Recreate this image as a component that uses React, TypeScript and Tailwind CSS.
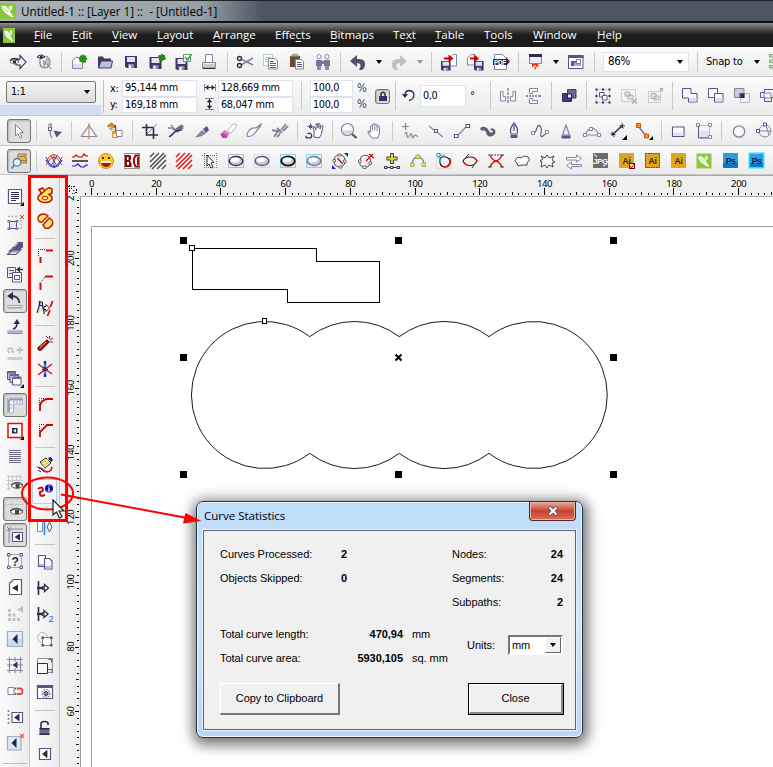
import React from "react";

const D = "#2c2c44";
const N = "#565684";
const S = "#84849f";
const R = "#c80000";

type L = [string, string?, string?, number?];

/* Draws a list of [path, stroke, fill, strokeWidth] layers. */
const layers = (list: L[]) =>
  list.map(([d, s = "none", f = "none", w = 1], i) => (
    <path key={i} d={d} stroke={s} fill={f} strokeWidth={w} />
  ));

const ell = (s: string, dots?: string, w = 1.5) => (
  <>
    {dots && <rect x="1.5" y="2.5" width="15" height="13" fill="none" stroke={dots} strokeDasharray="1 1" />}
    <ellipse cx="9" cy="9" rx="6.8" ry="4.6" fill="#c3c5e4" stroke={s} strokeWidth={w} />
    <ellipse cx="8" cy="8" rx="4.5" ry="2.4" fill="#fff" />
  </>
);

const disk = (x: number, y: number, k: number) => (
  <g transform={`translate(${x} ${y}) scale(${k})`}>
    <path d="M0 0h12v12H1.5L0 10.5z" fill="#3a3a66" />
    <path d="M2 1h8v5H2z" fill="#e0e3f6" />
    <path d="M3 8h6v4H3z" fill="#8a8ab4" />
    <path d="M4 9h2v3H4z" fill="#fff" />
  </g>
);

const badge = (label: string, bg: string, low: string, fg: string, edge?: React.ReactNode) => (
  <>
    <rect x="2" y="1" width="15" height="15" fill={bg} />
    <rect x="2" y="11" width="15" height="5" fill={low} />
    <text x="9.500" y="11.500" fontSize="8.500" fontWeight="700" textAnchor="middle" fill={fg} fontFamily="Liberation Sans, sans-serif">{label}</text>
    {edge}
  </>
);

const hatch = (c: string) =>
  layers([["M1 5L5 1M1 10L10 1M1 15L15 1M3 17L17 3M8 17L17 8M13 17L17 13", c, "none", 1.5]]);

const dotRect = (c: string, x: number, y: number, w: number, h: number) => (
  <rect x={x} y={y} width={w} height={h} fill="none" stroke={c} strokeDasharray="1 1" />
);

const icons: Record<string, React.ReactNode> = {
  eyeArrow: layers([["M7 6h4V2.500l6 6.500-6 6.500V12H7z", D, "#f4f4f8", 1.100], ["M1 9q4-4 9 0q-5 4-9 0z", S, "#fff"], ["M4 7.500h3v3H4z", "none", D], ["M1 7.500q4-4 9 0", D, "none", 1.200]]),
  eyeNo: layers([["M2 4q4-4 8 0q-4 3-8 0z", D, "#ddd"], ["M5 3h2.500v2.500H5z", "none", D], ["M5 6q-1 8 4 9 6 0 6-6 0-5-5-6", S, "none", 1.200], ["M8 7l8 9M12 5l-3 9M9 8v5M13 6v8", S]]),
  newDoc: layers([["M2.500 15.500V7.500L5.500 4.500H12.500V15.500z", S, "#fbfbff"], ["M3 11h9v4H3z", "none", "#dcdff2"], ["M13 1l1.200 1.500h2v2L17.500 6l-1.500 1.500v2h-2L13 10.500l-1.500-1.500h-2V7L8.500 5.500l1.500-1V2.500h2z", "none", "#2a8c1c"]]),
  open: layers([["M2 15V3.500h5l1 2h7v9.500z", "none", "#3c3c66"], ["M2.500 15L5 8h11.500l-1.500 7z", "#3c3c66", "#b9bfdd"]]),
  save: disk(3, 3, 1),
  saveNew: <>{disk(1.5, 4, 1)}<path d="M14 0l1 2h2v2l1 1-1 2h-2l-1 2-2-2h-1V5l-1-1 1-2h2z" fill="#1f8a18" /></>,
  saveCheck: <>{disk(1.5, 5, 1)}<rect x="9.500" y="1.500" width="7" height="7" fill="#fff" stroke={S} /><path d="M11 4l2.500 3 4-6" stroke="#18c418" strokeWidth="1.800" fill="none" /></>,
  print: layers([["M5.500 9V1.500h7V9", S, "#fff"], ["M2 9h14v7H2z", "none", "#c6cade"], ["M2 9h14v2H2z", "none", "#eceef6"], ["M2.500 9.500h13v5.500h-13z", S], ["M4 13h9", "#e0d050", "none", 1.500], ["M3 15.500h12", D, "none"]]),
  cut: <><path d="M6 6.500L17 12M6 11.500L17 5" stroke={S} strokeWidth="1.500" /><circle cx="3.500" cy="5.500" r="2" fill="none" stroke={D} strokeWidth="1.400" /><circle cx="3.500" cy="12.500" r="2" fill="none" stroke={D} strokeWidth="1.400" /></>,
  copy: layers([["M1.500 1.500h9v11h-9z", "#b4d4c8", "#f8fcfa"], ["M3 4.500h6M3 6.500h6M3 8.500h3", "#9fcfb8"], ["M6.500 5.500h6.500l2.500 2.500v8h-9z", S, "#fff"], ["M8 8.500h4M8 10.500h6M8 12.500h6M8 14.500h6", N]]),
  paste: layers([["M2 3h10v11H2z", "none", "#6a4a30"], ["M3 3.500q0-3 4-3t4 3z", "none", "#8fb09a"], ["M7.500 6.500h6l2 2v7.500h-8z", S, "#fff"], ["M9 9.500h4M9 11.500h5M9 13.500h5", N]]),
  find: layers([["M2 7h6v6H2zM10 7h6v6h-6z", "none", "#74749c"], ["M3 3.500a2 2 0 1 1 4 0q0 2.500-2 2.500t-2-2.500zM11 3.500a2 2 0 1 1 4 0q0 2.500-2 2.500t-2-2.500z", S, "#fff"], ["M3 13h4v4H3zM11 13h4v4h-4z", "none", "#8c8cb0"], ["M7 8h4v3H7z", "none", "#74749c"]]),
  undo: layers([["M1 8L8 2v4q9-1 8 6q0 3-3 5h-3q4-7-2-7v4z", "none", "#50506c"]]),
  redo: layers([["M17 8L10 2v4q-9-1-8 6q0 3 3 5h3q-4-7 2-7v4z", "none", "#c0c0c0"]]),
  imp: <>{layers([["M9.500 13V5l3.500-3.500h3.500V13z", S, "#fff"]])}{disk(1, 8, .8)}{layers([["M4 5.500h6", R, "none", 2], ["M8.500 1.500l5 4-5 4z", "none", R]])}</>,
  exp: <>{layers([["M1.500 12V5l3.500-3.500h4V12z", S, "#fff"]])}{disk(8, 8, .8)}{layers([["M4 5.500h5", R, "none", 2], ["M8 1.500l5 4-5 4z", "none", R]])}</>,
  pdf: <>{layers([["M2.500 16.500v-15h8l4 4v11z", S, "#fff"]])}<path d="M1 6h13v-2l4 4.500-4 4.500v-1H1z" fill={D} /><text x="8" y="11.500" fontSize="6.500" fontWeight="700" textAnchor="middle" fill="#fff" fontFamily="Liberation Sans, sans-serif">PDF</text></>,
  launch: layers([["M3.500 1.500h12v9h-12z", S, "#e8eaf8"], ["M3 1h13v3H3z", "none", D], ["M6 11h6l1 3-2-1-2 4-1-4-2 1z", "none", "#e83018"], ["M8 12h2v2.500H8z", "none", "#ffa020"]]),
  welcome: layers([["M1.500 2.500h14.500v13H1.500z", N, "#fff"], ["M1 2h15.500v3H1z", "none", N], ["M4 8h5v5H4z", "none", "#5c5c88"], ["M7 11l3-4h4v6H7z", "none", "#a7a9cf"], ["M9.500 6.500h4v4h-4z", "#7c7ca8", "#fff"]]),
  list: layers([["M1.500 1.500h4v2.500h-4zM1.500 7h4v2.500h-4zM1.500 12.500h4V15h-4z", "#7c9c74", "#cde8c8"]]),

  sizeH: layers([["M1.500 1v7M12.500 1v7", S], ["M2 4.500h10", D], ["M5 2.500L3 4.500l2 2zM9 2.500l2 2-2 2z", D, D]]),
  sizeV: layers([["M2 .5h9M2 11.500h9", S], ["M6.500 1v10", D], ["M4.500 4l2-2.500 2 2.500zM4.500 8l2 2.500 2-2.500z", D, D]]),
  rot: layers([["M4 8q0-4.500 4.500-4.500 4.500.5 4.500 5-.5 4-5 5", D, "none", 1.300], ["M1 7h6L4 11z", "none", D]]),
  mirH: layers([["M1.500 4.500h2.500v5h2.500v4.500h-5zM16.500 4.500H14v5h-2.500v4.500h5z", S, "#fbfbff"], ["M9 1v3M9 5v3M9 9v3M9 13v3", D, "none", .8]]),
  mirV: layers([["M4.500 1.500h8v3h-5v2h-3zM4.500 16.500h8v-3h-5v-2h-3z", S, "#fbfbff"], ["M1 9h2M4 9h2M7 9h2M10 9h2M13 9h3", D]]),
  order: layers([["M2.500 6.500h9v8h-9z", "#2c2c5c", "#40407c"], ["M7.500 2.500h8.500v8.500H7.500z", "#40406c", "#6a6a9c"], ["M7.500 7h4v4h-4z", "#1d1d44", "#f4f4ff"]]),
  group: layers([["M2.500 2.500h13v13h-13z", "#c8c8da"], ["M5.500 5.500h4.500v4.500H5.500z", N, "#fff"], ["M8.500 8.500h4.500v4.500H8.500z", N, "#fff"], ["M1.500 1.500h2v2h-2zM14.500 1.500h2v2h-2zM1.500 14.500h2v2h-2zM14.500 14.500h2v2h-2zM8 1.500h2v2H8zM8 14.500h2v2H8zM1.500 8h2v2h-2zM14.500 8h2v2h-2z", "none", D]]),
  ungroup: <>{dotRect("#aaa", 1.5, 2.5, 14, 12)}{layers([["M5 5h5v4H5zM8 8h5v4H8z", "#b0b0b0", "#e4e4e4"], ["M12 12l5 4.500M17 12l-5 4.500", "#b0b0b0", "none", 1.500]])}</>,
  ungroupAll: <>{dotRect("#aaa", 2.5, 4.5, 12, 11)}{layers([["M5 6.500h5v5H5zM8 9h5v4H8z", "#b0b0b0", "#e4e4e4"], ["M14 1l3 3M17 1l-3 3", "#aaa", "none", 1.300]])}</>,
  weld: layers([["M1.500 1.500h8.500v5h6v8.500H7.500V11h-6z", N, "#f8f8ff"], ["M8 11h7.500v3.500H8z", "none", "#dcdff0"]]),
  trim: layers([["M1.500 1.500h9v9h-9z", N, "#f8f8ff"], ["M7.500 6.500h8.500v8.500h-8.500z", N, "#f8f8ff"], ["M8 11h7.500v3.500H8z", "none", "#dcdff0"]]),
  inter: <>{layers([["M1.500 1.500h9.500v9H1.500z", S, "#c8cbe0"], ["M6.500 6h5v5h-5z", "none", D]])}{dotRect(S, 7.5, 6.5, 9, 9)}</>,
  simp: layers([["M1.500 5.500h4v-3h10v8h-3v4h-7v-4h-4z", N, "#f4f4ff"], ["M5 6h7v5H5z", S]]),

  pick: layers([["M5.500 2.500V14l2.500-2.500L10 16l2-1-2-4.300 3.500-.200z", S, "#fff"]]),
  shape: layers([["M6 1v4M5 9q0 4 2 7M3 3l4-1", S, "none", 1.200], ["M3.500 5h3v3.500h-3z", N, "#fff"], ["M8.500 8.500L17 10l-5.500 5.500z", "none", N]]),
  tri: layers([["M9 3.500L16.500 14.500H1.500z", S, "#fafaff", 1.200], ["M9 1v16", "#f08020", "none", 1.200]]),
  fill: layers([["M1.500 4l4-3 4 3.500-4 3.500z", "#806030", "#d89030"], ["M2 5l6 2", "#ffd890"], ["M9 3q2 3 0 6", D], ["M6.500 9.500h5v6h-5z", "#e08820", "#fcecd0"], ["M10.500 8.500h5.500v6h-5.500z", S, "#fff"], ["M6 10h5v2H6z", "none", "#f09828"]]),
  crop: layers([["M5.500 2v11H17M1 5.500h11.500V17", D, "none", 1.600], ["M6 12L16 2", S]]),
  knife2: layers([["M1 6h4l3 3M4 3l5 6-6 6", S, "none", 1.300], ["M8 7l7-5v2l2-1-1 3h1l-7 5z", "none", "#6c6c84"], ["M2 15l7-6 6-1", D, "none", 1.200]]),
  knife: layers([["M2 15.500L9 8l4 3q-4 4-11 4.500z", "none", S], ["M10 7l4-3 2 4-3 3z", "none", N]]),
  eraser: layers([["M8 9L14 2h3v3l-5 6z", "#b4b4c8", "#fff"], ["M1.500 12l4-4 5 3.500-3 4.500h-4z", "none", "#e070c8"], ["M1.500 12l2 4h4l1-2-5-3z", "none", "#b8409a"]]),
  smear: layers([["M17 1.500L11 6q-5-1-8 4-2 4 0 4.500 5 0 8-5l5-6", S, "#f8f8ff", 1.200]]),
  rough: layers([["M3 15l4-6M1 8l9 2M9 12l-3 3M6 6l5 5M10 8l5-6M12 9l5-5", S, "none", 1.800]]),
  free: layers([["M1 4.500h7M4.500 1v7", S], ["M3 3l3 3M6 3L3 6", D], ["M8 15V9L7 5q1-1 2 1l1 2V2q1-1 2 0v4-4q1.500-1 2 0v5l1-3q2-1 2 1l-2 8-2 3z", N, "#fff"], ["M1.500 12q3-2 4 1t-3 3-2-2", D, "none", 1.200]]),
  zoomI: <><circle cx="7.500" cy="7.500" r="6" fill="#fafafc" stroke={S} strokeWidth="1.200" /><path d="M2.500 8.500h10q-1.500 4-5 4t-5-4z" fill="#d4d6e2" /><path d="M12 12l4.500 4" stroke="#50506a" strokeWidth="2.300" /></>,
  hand: layers([["M6 16L2 10.500q0-2 2.500-.5V4.500q1.200-1.500 2 0V2.500q1.200-1.500 2.300 0v.5q1.200-1.500 2.300 0v1.500q1.700-1 2.400 1v6l-2 4.500z", S, "#fff", 1.100], ["M6.500 4.500v4M8.800 3.500v5M11.200 5v4", S]]),
  freehand: layers([["M4.500 1v7M1 4.500h7", S, "none", 1.200], ["M4 12q2-4 2 1t3 0q1-3 2 1t2 0q2-2 4 1", S, "none", 1.200]]),
  twoPt: layers([["M2 4l5 4M11 11l5 4", S, "none", 1.200], ["M7.500 7.500h3v3h-3z", N, "#fff", 1.100]]),
  line: layers([["M4 14L14 4", S, "none", 1.200], ["M1.500 12.500h3.500v3H1.500zM13 2.500h3.500v3H13z", N, "#fff", 1.100]]),
  art: layers([["M1 7q1-3 5-2 3 1 4 4 2 3 4 1 0-2-3-2 1-3 4-1 3 3 0 6-4 3-7 0-1-4-3-5-2 2-4-1z", "none", "#5c5c74"]]),
  pen: layers([["M9 1q-5 6-3 11h6q2-5-3-11z", N, "#f2f2fa", 1.200], ["M9 3v6", D], ["M5.500 13h7v3h-7z", "none", N]]),
  bspline: layers([["M3 11q2-1 3-5t3-2 1 7 2 3 3-3", N, "none", 1.100], ["M.5 9.500h3v3h-3zM14.500 8.500h3v3h-3z", S, "#fff"]]),
  pyr: layers([["M9 3l3.500 10h-7z", S, "#e8e8f4", 1.100], ["M4.500 13.500h9v3h-9z", "none", N]]),
  arc3: layers([["M2 13q7-14 14 0M2 13h14", S, "none", 1.100], ["M.5 11.500h3v3h-3zM14.500 11.500h3v3h-3zM6.500 5.500h3v3h-3z", S, "#fff"]]),
  dim: layers([["M3 13L14 3", D, "none", 1.500], ["M1.500 11.500l4 3.500M12 1l4 3.500", S, "none", 1.300], ["M2.500 9.500l.5 4 4-.5zM10 3.500l4-.5.5 4z", "none", D], ["M18 18h-5l5-5z", "none", "#000"]]),
  conn: layers([["M4 5l7 9", "#7878a0", "none", 1.500], ["M1.500 1.500h4v4h-4zM9.500 12h4v4h-4z", "#c05a10", "#ff9020"], ["M18 18h-4l4-4z", "none", "#000"]]),
  rect: layers([["M3.500 5h11.500v9.500H3.500z", N, "#fff", 1.100], ["M4 10.500h10.500V14H4z", "none", "#e0e2f0"]]),
  rect3: <>{dotRect(S, 3.5, 3.5, 11, 12)}{layers([["M4 9h10v6H4z", "none", "#dfe1f0"], ["M1.500 1.500h3v3h-3zM13.500 1.500h3v3h-3zM13.500 13.500h3v3h-3z", S, "#fff"], ["M3.500 4v12H13", N]])}</>,
  circ: <circle cx="9" cy="9.500" r="5.700" fill="#f6f6fc" stroke={S} strokeWidth="1.300" />,
  circ3: <><circle cx="9" cy="9" r="6" fill="#f2f2fa" stroke={S} />{layers([["M3 9h12M10 3l3 10", S], ["M.5 7.500h3v3h-3zM7.500 1h3v3h-3z", N, "#fff"]])}</>,

  macro: layers([["M8 2h8.500l-1.500 4h1.500v5H9L7 8z", "#a07828", "#e4b860"], ["M9 4.500h6M10 8.500h6", "#a07828"], ["M7 6.500a3.800 3.800 0 1 0 .1 0z", "#5080a8", "#e4f2ff", 1.300], ["M4.500 13l-3 3.500", "#5080a8", "none", 1.800]]),
  waves: layers([["M1 10L5 4q4-3 8 0l4 6M1 13l5-7q3-2 6 0l5 7", "#e03030", "none", 1], ["M1 5l3 6q5 7 10 0l3-6M1 8l4 6q4 3 8 0l4-6", "#3030e0", "none", 1], ["M6 4l6 10M12 4L6 14M9 3v12", "#444", "none", .8]]),
  waves2: layers([["M1 5h2l2-2 3 2h3l2-3 2 2h2", R, "none", 1.200], ["M1 9h16", "#000", "none", 1.300], ["M1 14h3l3-2 3 3h3l2-2h2", "#1020d8", "none", 1.200]]),
  smile: <><circle cx="9" cy="9" r="7.500" fill="#ffc928" stroke="#d88818" /><path d="M3.500 9h11q-1 6-5.500 6t-5.500-6z" fill="#a81c10" /><path d="M4 9h10v2H4z" fill="#fff" /><path d="M5 6h2M11 6h2" stroke="#502000" strokeWidth="1.800" /></>,
  bx: <>{dotRect(D, 1.5, 1.5, 15, 15)}{layers([["M2 3h4q3 0 2 4l-1 2q2 1 1.500 6H2z", "none", "#8c0808"], ["M4 5h1.500v3H4zM4 10h2v3H4z", "none", "#fff"], ["M16.500 3.500h-4l-1.500 3.500v4l1.500 3.500h4M15 5v8", "#8c0808", "none", 1.900]])}</>,
  hatchG: hatch("#505050"),
  hatchR: hatch("#e81818"),
  sel: <><path d="M1 3.500h16M3.500 1v16" stroke="#d03030" strokeDasharray="1 1" /><path d="M15.500 1v16M3 15.500h14" stroke="#28a8b8" strokeDasharray="1 1" /><path d="M6 3v11l2-2 2 4 2-1-2-4 3-.5z" fill="#fff" stroke={D} /></>,
  el1: ell("#33334c", S),
  el2: ell("#5c5c74", "#c4c4d4"),
  el3: ell("#101010", "#30a8e8", 1.8),
  el4: ell("#77778c", "#30a8e8"),
  rotA: layers([["M4 5q5-5 9 0q3 4 0 8-4 4-9 0q-3-4 0-8z", "#555", "none", 1], ["M6.500 6l5 6", R, "none", 1.200], ["M1 17v-4l4 4zM17 1v4l-4-4z", "none", "#1020e0"], ["M2 7.500h2.500V10H2zM12.500 8H15v2.500h-2.500zM7 2h3v2H7zM8 14h3v2H8z", "#555", "#fff", .8]]),
  rotB: layers([["M4 5q5-4 9 1q2 4-1 8-5 3-9-1-1-4 1-8z", "#555", "none", 1], ["M9 9L16 2M12 2l5 4", R, "none", 1.200], ["M1.500 8H4v2.500H1.500zM12 10h2.500v2.500H12zM6 14h3v2.500H6z", "#555", "#fff", .8]]),
  plus: layers([["M9 1v11M3.500 6.500h11", "#404020", "none", 3.800], ["M9 2v9M4.500 6.500h9", "#e8dc50", "none", 1.800], ["M2 15.500h14", D], ["M1.500 14.500h2.500v2H1.500zM7.500 14.500H10v2H7.500zM14 14.500h2.500v2H14z", D, "#fff"]]),
  arcY: layers([["M3 12q1-7 6-7t6 7", S, "none", 1.400], ["M7 3h4v3.500H7zM1.500 11h3.500v3.500H1.500zM13 11h3.500v3.500H13z", "#a8a870", "#f4e830"]]),
  redCir: <>{dotRect("#ccc", 1.5, 1.5, 15, 15)}{layers([["M5 7q1-3 6-2 5 2 4 6-2 4-6 4-5-1-4-8z", "#222", "none", 1.200], ["M7 14q5 3 8-2 1-4-1-6", "#e01010", "none", 1.400], ["M2 3.500l8-.500M3 3l3 7", "#20c0e0", "none", 1.200], ["M2 1.500h3v3H2z", "#20a0c0", "#fff"]])}</>,
  redEl: layers([["M2 9q2-4 7-4t7 4q-2 4.500-7 4.500T2 9z", "#222", "none", 1.100], ["M13 6q2 1 3 3M2.500 10q1 2 4 3", "#e01010", "none", 1.300], ["M13 13l-2 3M5 5l3-3", "#222", "none", .9]]),
  redX: layers([["M3 3q2 5 6 6-4 1-6 6M15 3q-2 5-6 6 4 1 6 6", "#d01010", "none", 1.300], ["M1 3h2M4 3h2M7 3h2M10 3h2M13 3h4M1 15h4M13 15h4", "#222", "none", .9]]),
  poly: layers([["M3 7l2-2 3 1 3-2 4 1 1.500 3-2.500 3 0 2H9l-4 1-1-3-2-2z", "#333", "#fff", .9]]),
  blob: layers([["M2 4l4 2 2-3 2 3 5-2-2 4 3 2-3 1 1 4-4-2-2 3-2-3-4 2 1-5-2-1 3-2z", "#333", "#fff", .9]]),
  swap: layers([["M1.500 5.500h10V3l5 3.500-5 3.500V8h-10zM16.500 12.500h-10V10l-5 3.500 5 3.500v-2.500h10z", S, "#fff", 1]]),
  jpg: <>{layers([["M2 1h15v15H2z", "none", "#6c6c6c"], ["M3 2l3 3M12 14l4-2", "#ccc", "none", 1.500]])}<text x="9.500" y="12" fontSize="8" fontWeight="700" textAnchor="middle" fill="#fff" fontFamily="Liberation Sans, sans-serif">JPG</text></>,
  ai1: badge("Ai", "#d8a824", "#f0a018", "#3c2800", <><rect x="12.500" y="11.500" width="5" height="5" fill="#fff" stroke="#700" /><path d="M13 14l1.500 2 2.500-4" stroke="#d00" fill="none" /></>),
  ai2: badge("Ai", "#d8a824", "#f0a018", "#3c2800", <rect x="2.500" y="1.500" width="14" height="14" fill="none" stroke="#a02000" strokeDasharray="1.500 1" />),
  ai3: badge("Ai", "#d8a824", "#f0a018", "#3c2800"),
  corel: layers([["M1.500 1.500h15v15h-15z", "none", "#8cc63c"], ["M3 4.500q3-1 5 1l1.500 2Q9 4 12.500 4q1 4-2 5l4 6q-3 0-6-3Q4 10 3 4.500z", "none", "#fff"], ["M5 6.500l4.500 4M11.500 5.500l-2 3", "#8cc63c", "none", .7]]),
  ps1: badge("Ps", "#2c9ce0", "#0878c8", "#04204c"),
  ps2: badge("Ps", "#2c9ce0", "#0878c8", "#04204c", <rect x="2.250" y="1.250" width="14.500" height="14.500" fill="none" stroke="#18e8f8" strokeWidth="1.500" />),

  text: layers([["M2.500 1.500h13v14h-13z", N, "#fff", 1.200], ["M5 4.500h8M5 6.500h8M5 8.500h8M5 10.500h8M5 12.500h5", D], ["M18 18h-4l4-4z", "none", "#000"]]),
  selx: <><path d="M2 2.500h10M15 6v10" stroke="#90c4bc" strokeWidth="1.500" strokeDasharray="2 1.500" fill="none" />{layers([["M3.500 7.500h7v7h-7z", N, "#e4e6f4"], ["M1.500 6h3v2.500H1.500zM9.500 6h3v2.500h-3zM1.500 13.500h3V16H1.500zM9.500 13.500h3V16h-3z", "none", S], ["M14 1l4 4M18 1l-4 4", "#e83010"]])}</>,
  stack: layers([["M1.500 14.500l6-5H15l-5 5zM3.500 11l5-4H16l-5 4z", N, "#d8daec", 1.100], ["M6 8l6-6h5v5l-5 3z", "none", "#55557c"], ["M8 7l4-4", "#ddd"]]),
  docs: layers([["M1.500 1.500h8v10h-8z", N, "#e8e8f4"], ["M6.500 6.500h9v9.500h-9z", N, "#fff"], ["M8.500 9.500h5v4h-5z", N], ["M3 4.500h5M3 7.500h3", N, "none", 1.200], ["M17 3.500h-5", D, "none", 1.400], ["M10 3.500l4-3v6z", "none", D]]),
  back: layers([["M3.500 4q9-1 10 7", D, "none", 1.800], ["M1 4l6-4v8z", "none", D], ["M1.500 13h15v3.500h-15z", "none", "#9a9fc4"], ["M2 14.500h14", "#e8eaf8", "none"]]),
  fwd: layers([["M7 11q4-1 4-6", D, "none", 1.500], ["M7.500 6l3.500-5 3 5z", "none", D], ["M1.500 12.500h15v3.500h-15z", "none", "#8489b0"], ["M2 14h14", "#dde0f4"]]),
  off: layers([["M3.500 9q-3-3 0-5 4 0 3 4M5 8h3", "#c0c0c0", "none", 1.500], ["M10.500 6h6.500M13.700 3v6.500", "#c0c0c0", "none", 1.800], ["M1.500 13h15v3h-15z", "none", "#cfcfcf"]]),
  dup: layers([["M1.500 1.500h8v8h-8z", N, "#c0c2d4"], ["M4 4.500h8.500v8H4z", N, "#d8daec"], ["M6.500 7h8.500v8H6.500z", N, "#fafaff"], ["M1.500 1.500h8v2h-8zM4 4.500h8.500v1.500H4zM6.500 7h8.500v2H6.500z", "none", "#6a6a90"], ["M18 18h-4l4-4z", "none", "#000"]]),
  ruler: layers([["M1.500 2h15v6H7.500v9h-6z", "#a4acc4", "#f4f8ff"], ["M3 3.500h13M3 3.500V16", "#8c94b8", "none", 1.800], ["M8 5v2M11 5v2M14 5v2M4.500 9h2M4.500 12h2", "#8c94b8"]]),
  redBox: layers([["M2 1.500h14v14H2z", "#f00808", "#fff", 1.500], ["M6 6h5.500v5.500H6z", "none", D], ["M10 7v3.500l-3-1.800z", "none", "#fff"], ["M18 18h-4l4-4z", "none", "#000"]]),
  lines: <path d="M3 2.500h12M3 4.500h12M3 6.500h12M3 8.500h12M3 10.500h12M3 12.500h12M3 14.500h12" stroke="#6c6c88" strokeWidth="1.100" />,
  gridEye: layers([["M1 2.500h15M1 6.500h15M1 10.500h4M1 14.500h4M2.500 1v15M6.500 1v7M10.500 1v6M14.500 1v6", "#c4c6d4"], ["M5 12q6-6 12 0q-6 5-12 0z", "#666", "#fff"], ["M5 11q6-5 12 0", "#555", "none", 1.300], ["M9.500 10h4v4h-4z", "none", "#444"]]),
  eye: layers([["M5.500 0v17M0 4.500h18", "#c4c6d8"], ["M4 12q6-6 13 0q-7 5-13 0z", "#666", "#fff"], ["M4 11q6-5 13 0", "#555", "none", 1.300], ["M9 10h4v4H9z", "none", "#444"]]),
  snap: layers([["M1 1l4 4M5 1L1 5", S], ["M3 3h14M3 3v14", S], ["M6.500 6.500h10v9h-10z", N, "#fff", 1.100], ["M8.500 11l5.500-3.500v7z", "none", D]]),
  q: <>{dotRect(N, 2.5, 2.5, 13, 13)}<path d="M1.500 1.500H4V4H1.500zM14 1.500h2.500V4H14zM1.500 14H4v2.500H1.500zM14 14h2.500v2.500H14z" fill="#fff" stroke={N} /><text x="9" y="13.500" fontSize="12" fontWeight="700" textAnchor="middle" fill={D} fontFamily="Liberation Sans, sans-serif">?</text></>,
  pg: layers([["M3.500 5.500l4-4h8v15h-12z", N, "#fff", 1.200], ["M6 10l6-3.500v7z", "none", D]]),
  bars: layers([["M2 5h3v3H2zM2 9.500h3v3H2zM2 14h3v3H2zM6.500 9.500h3v3h-3zM6.500 14h3v3h-3zM11 14h3v3h-3zM17 2v7l-6-3.500z", "none", "#c0c0c0"]]),
  left: layers([["M1.500 1.500h15v15h-15z", "#9aaec4", "#e4edf6", 1.200], ["M2 9h14v7H2z", "none", "#ccdae8"], ["M6.500 9l5-5v10z", "none", "#222244"]]),
  gridA: layers([["M1 3.500h16M1 9h16M1 14.500h16M3.500 1v16M9 1v16M14.500 1v16", S], ["M6 6h6v6H6z", "none", "#fff"], ["M6.500 9l5-3.500v7z", "none", D]]),
  magnet: layers([["M2 5.500h6v7H2z", S, "#fff"], ["M11 6.500h3q2.500 0 2.500 2.800T14 12h-3", "#e84040", "none", 1.800], ["M9.500 5.500v2M9.500 11v2", "#556", "none", 1.500]]),
  dash: <><path d="M2.500 2v15" stroke={S} strokeWidth="1.600" strokeDasharray="2 2" />{layers([["M6 4.500h10.500v10H6z", N, "#fff", 1.100], ["M8 9.500l5.500-4v8z", "none", D]])}</>,
  leftx: layers([["M1.500 2.500h13.500v13.500h-13.500z", "#9aaec4", "#dce8f2", 1.200], ["M5.500 9l5-5v10z", "none", "#222244"], ["M14 0l4 4M18 0l-4 4", "#f05828", "none", 1.200]]),

  ribbon: layers([["M3 3.500l3.500-1.500 2 2.500L13 1.500l3 1.500v4l-3 1.500q3.500 1.500 3 4.500-1 3.500-6.500 3.500T2 13q-.500-3 3.500-5.500z", "#c01010", "#ffec48", 1.500], ["M7 10.500h4l1 2-3 1.500-3-1.500z", "#c01010", "#fff"], ["M5.500 7.500L9 5", "#c01010", "none", 1.200]]),
  ovals: <><path d="M3 9.500Q0 5 5 2.500 9 1 12 4L5.500 10.500z" fill="#ffec60" stroke="#c01010" strokeWidth="1.400" /><path d="M7 13L13.500 6q4 2.500 3 6.500-3.500 5-7.500 3.500z" fill="#ffec60" stroke="#c01010" strokeWidth="1.400" /></>,
  cnr1: <><path d="M2.500 9V2.500H10" stroke={D} strokeDasharray="1 1" fill="none" /><path d="M4.500 10v6M10 3.500h7" stroke="#d01010" strokeWidth="2" /></>,
  cnr2: <><path d="M3.500 11L9 4" stroke={D} strokeDasharray="1 1" fill="none" /><path d="M4.500 10v7M9 3.500h8" stroke="#d01010" strokeWidth="2" /></>,
  path2: layers([["M1 14L4 4", "#1028d0", "none", 1.200], ["M2 14l2-5", "#e0d020", "none", 1.200], ["M3.500 2.500v4h3v-3zM6 6l2 6v3", "#222", "none", 1.200], ["M8 7.500h2V5.500l3.500 3.500-3.500 3.500v-2H8z", "#222", "#fff"], ["M16.500 2l-2 6M14 11l-2.500 6", "#d81010", "none", 1.800]]),
  dyn: layers([["M2 14L11 6l2 2-8 8q-3 1-3-2z", "#600", "#d02020", 1.200], ["M4 13l6-5", "#ff9078"], ["M13 5l1-3M14 6l3-2M14 8h3M12 4L10 2", "#600", "none", .9]]),
  star: layers([["M2 4l14 10M2 15L16 4", "#c81818", "none", 1.500], ["M9 1v16", "#1430b0", "none", 2.400], ["M9 4v3M9 11v3", "#40b0f0", "none", 1.400], ["M6 9.500h6", "#a01010", "none", 1.500]]),
  fil: <><path d="M3.500 10V3.500H9" stroke={D} strokeDasharray="1 1" fill="none" /><path d="M4 16v-5q1-6 7-7h6" stroke="#c00808" strokeWidth="1.800" fill="none" /></>,
  cham: <><path d="M3.500 10V3.500H9" stroke={D} strokeDasharray="1 1" fill="none" /><path d="M4 16v-5l7-7h6" stroke="#c00808" strokeWidth="1.800" fill="none" /></>,
  brush: layers([["M4 6l6-4 5 5-6 5z", "#222", "#fff"], ["M6 7l6-3.500M7 10l6-4", "#e0cc30", "none", 1.800], ["M12 2l3-1 2 3-2 2z", "none", "#14148c"], ["M3 12q3 0 5 3 4 2 7-1l1-3", "#d01010", "none", 1.700], ["M1 11l3 1 4 3M2 14l3 2", "#222"]]),
  stat: <><path d="M2 7q4-3 5 0 0 3-3 3-1 3 2 4l3-1" stroke="#d00808" strokeWidth="1.900" fill="none" /><circle cx="13" cy="6.500" r="4" fill="#1010a0" /><path d="M13 6v3M12 6h1M11.500 9h3M12.500 4h1.500" stroke="#fff" /></>,
  mirB: layers([["M1.500 3.500h5v10h-5z", S, "#fff"], ["M8.500 1v16", "#1088f0", "none", 1.500], ["M13.500 4l2.500 5-2.500 5-2.500-5z", N, "#f0f0fa"]]),
  pages: layers([["M2.500 2.500h7v11h-7z", N, "#fff", 1.100], ["M8.500 5.500h5l2.500 2.500v8h-7.500z", N, "#f4f4ff", 1.100], ["M3 11h5v2H3zM9 13h6.500v2.500H9z", "none", "#b8b8e0"]]),
  arrR: layers([["M2.500 2v14", D, "none", 1.600], ["M1 9h6", D, "none", 2.200], ["M6.500 8h2V5.500L12.500 9l-4 3.500V10h-2z", D, "#fff", 1.300]]),
  arr2: <>{layers([["M2.500 2v14", D, "none", 1.600], ["M1 9h6", D, "none", 2.200], ["M6 8h2V5.500L12 9l-4 3.500V10H6z", D, "#fff", 1.300]])}<text x="15" y="17" fontSize="8.500" fill="#1060f0" textAnchor="middle" fontFamily="Liberation Sans, sans-serif">2</text></>,
  cirSq: <><circle cx="6.500" cy="6.500" r="5" fill="#f4f4f4" stroke="#bbb" /><rect x="6.500" y="6.500" width="9" height="8" fill="#fafaff" stroke={S} /><path d="M5.500 5.500H8V8H5.500zM14 5.500h2.500V8H14zM5.500 13H8v2.500H5.500zM14 13h2.500v2.500H14z" fill={N} /></>,
  boxes: <>{dotRect(D, 1.5, 1.5, 15, 14)}<path d="M1.500 6.500h10v10h-10z" stroke={D} fill="#f8f8f8" /><path d="M12.500 2.500h3v3M12 12.500h4v3" stroke={N} fill="none" /></>,
  gear: <>{layers([["M1.500 2.500h15v13h-15z", N, "#fff", 1.200], ["M1 2h16v3H1z", "none", N]])}<circle cx="10" cy="10.500" r="3.800" fill="none" stroke={S} strokeWidth="1.500" strokeDasharray="1.500 1" /><circle cx="10" cy="10.500" r="2" fill="#9090ac" stroke={D} /></>,
  lock: layers([["M5 9V4.500q0-2 3.500-2t3.500 2V6", D, "none", 1.600], ["M3.500 9h10v7H3.500z", "none", "#6c6c90"], ["M3.500 9h10v1.500H3.500zM3.500 14.500h10V16H3.500z", "none", D]]),
  sqArr: layers([["M3.500 3.500h11v11h-11z", N, "#fff", 1.200], ["M6.500 9l4.500-3.500v7z", D, D, .8]]),
};

const Ic = ({ n }: { n: string }) => (
  <svg viewBox="0 0 18 18" className="block h-[18px] w-[18px] shrink-0 overflow-visible">{icons[n]}</svg>
);

const pressedCls = "rounded-[3px] border-[1.5px] border-[#747474] bg-[#dedede] shadow-[inset_1px_1px_2px_#b4b4b4]";

/* One 26px slot of a horizontal toolbar. */
const Cell = ({ n, on }: { n: string; on?: boolean }) => (
  <div className="flex h-full w-[26px] shrink-0 items-center justify-center">
    {on ? <div className={`flex h-6 w-6 items-center justify-center ${pressedCls}`}><Ic n={n} /></div> : <Ic n={n} />}
  </div>
);

const Sep = ({ w, h = "h-5" }: { w: string; h?: string }) => (
  <div className={`flex h-full shrink-0 items-center justify-center ${w}`}><div className={`w-px bg-[#c8c8c8] ${h}`} /></div>
);

const Caret = ({ w, c = "border-t-black" }: { w: string; c?: string }) => (
  <div className={`flex shrink-0 items-center justify-center ${w}`}>
    <div className={`h-0 w-0 border-x-[3.5px] border-t-4 border-x-transparent ${c}`} />
  </div>
);

const Cells = ({ list }: { list: string }) => <>{list.split(" ").map((n) => <Cell key={n} n={n} />)}</>;

const bar = "flex shrink-0 items-center overflow-hidden border-b border-[#c8c8c8] bg-gradient-to-b from-[#fbfbfb] to-[#ebebeb]";
const field = "flex items-center border border-[#dfe3ec] bg-white";
const tahoma = "font-['DejaVu_Sans_Condensed','DejaVu_Sans',sans-serif] [font-stretch:condensed] text-[10.8px] tracking-[-0.35px]";
const segoe = "font-['Open_Sans',sans-serif] [font-stretch:normal]";

const menus: [string, string, string, string][] = [
  ["", "F", "ile", "w-[38px]"], ["", "E", "dit", "w-[40px]"], ["", "V", "iew", "w-[45px]"], ["", "L", "ayout", "w-[56px]"],
  ["", "A", "rrange", "w-[62px]"], ["Effe", "c", "ts", "w-[55px]"], ["", "B", "itmaps", "w-[63px]"], ["Te", "x", "t", "w-[42px]"],
  ["", "T", "able", "w-[49px]"], ["T", "o", "ols", "w-[49px]"], ["", "W", "indow", "w-[64px]"], ["", "H", "elp", "w-[40px]"],
];

const leftTools = "text selx stack docs back* fwd off dup ruler* redBox lines gridEye eye* snap* q pg bars left gridA magnet dash leftx".split(" ");

/* The second strip: icons take 26px, a dash is a thin divider. */
const macroTools: [string, string][] = [
  ["ribbon", "h-[26px]"], ["ovals", "h-[26px]"], ["-", "h-[9px]"], ["cnr1", "h-[26px]"], ["cnr2", "h-[26px]"], ["path2", "h-[26px]"],
  ["-", "h-[9px]"], ["dyn", "h-[26px]"], ["star", "h-[26px]"], ["-", "h-[9px]"], ["fil", "h-[26px]"], ["cham", "h-[26px]"], ["-", "h-[9px]"],
  ["brush", "h-[26px]"], ["stat", "h-[26px]"], ["-", "h-[10px]"], ["mirB", "h-[26px]"], ["-", "h-[9px]"], ["pages", "h-[26px]"],
  ["arrR", "h-[26px]"], ["arr2", "h-[26px]"], ["cirSq", "h-[26px]"], ["boxes", "h-[26px]"], ["gear", "h-[26px]"], ["-", "h-[10px]"],
  ["lock", "h-[26px]"], ["sqArr", "h-[26px]"],
];

const UNIT = 3.236;

const HRuler = () => (
  <svg className="block h-[22px] w-[713px] shrink-0" viewBox="60 175 713 22" shapeRendering="crispEdges">
    <path d="M60 175.500H773M80 196.500H773" stroke="#a8a8a8" />
    <path d="M68 186.500h8M69.500 185v8M71 188l5 5M76 189v4h-4" stroke="#222" fill="none" strokeDasharray="1.500 1" />
    {Array.from({ length: 108 }, (_, i) => {
      const v = i * 2 - 2;
      const x = Math.round(91 + v * UNIT) + 0.5;
      return <path key={i} d={`M${x} ${v % 20 === 0 ? 188 : v % 10 === 0 ? 192 : 193}V195`} stroke="#000" />;
    })}
    {Array.from({ length: 11 }, (_, i) => (
      <text key={i} x={91.5 + i * 20 * UNIT} y="187" fontSize="9.500" textAnchor="middle" fontFamily="'Noto Sans', sans-serif">{i * 20}</text>
    ))}
  </svg>
);

const VRuler = () => (
  <svg className="block h-[570px] w-[21px] shrink-0 overflow-visible" viewBox="60 197 21 570" shapeRendering="crispEdges">
    <path d="M80.500 197V767" stroke="#999" />
    {Array.from({ length: 88 }, (_, i) => {
      const v = 218 - i * 2;
      const y = Math.round(226 + (210 - v) * UNIT) + 0.5;
      return <path key={i} d={`M${v % 20 === 0 ? 75 : v % 10 === 0 ? 76 : 77} ${y}H79`} stroke="#000" />;
    })}
    <text x="74" y="198.500" transform="rotate(-90 74 198.500)" fontSize="9.500" textAnchor="middle" fontFamily="'Noto Sans', sans-serif">2</text>
    {[200, 180, 160, 140, 120, 100, 80, 60].map((v) => {
      const y = 226 + (210 - v) * UNIT;
      return <text key={v} x="74" y={y} transform={`rotate(-90 74 ${y})`} fontSize="9.500" textAnchor="middle" fontFamily="'Noto Sans', sans-serif">{v}</text>;
    })}
  </svg>
);

const Drawing = () => (
  <svg className="block h-[570px] w-[692px] bg-white" viewBox="81 197 692 570">
    <path d="M91.500 767V226.500H773" stroke="#999" fill="none" />
    <g fill="none" stroke="#000">
      <path d="M192.500 248.500H316.500V261.500H379.500V302.500H287.500V289.500H192.500z" shapeRendering="crispEdges" />
      <path d="M309.700 336.700A73.500 73.500 0 1 0 309.700 453.300A73.500 73.500 0 0 0 399.300 453.300A73.500 73.500 0 0 0 489 453.300A73.500 73.500 0 1 0 489 336.700A73.500 73.500 0 0 0 399.300 336.700A73.500 73.500 0 0 0 309.700 336.700z" strokeWidth=".9" />
    </g>
    <rect x="189.500" y="245.500" width="5" height="5" fill="#fff" stroke="#000" />
    <rect x="262.500" y="318.500" width="4" height="5" fill="#fff" stroke="#000" />
    {[[180, 237], [395, 237], [610, 237], [180, 354], [610, 354], [180, 471], [395, 471], [610, 471]].map(([x, y]) => (
      <rect key={`${x}-${y}`} x={x} y={y} width="7" height="7" fill="#000" />
    ))}
    <path d="M395.500 354.500l6 6M401.500 354.500l-6 6" stroke="#000" strokeWidth="2" />
  </svg>
);

const Row = ({ label, value, unit, w }: { label: string; value: string; unit?: string; w: string }) => (
  <div className="flex h-6 items-center">
    <span>{label}</span>
    <div className="grow" />
    <b className="text-right">{value}</b>
    <span className={w}>{unit}</span>
  </div>
);

const Dialog = () => (
  <div className="absolute left-[196px] top-[501px] flex h-[237px] w-[387px] flex-col rounded-[7px] border-[1.5px] border-[#26323e] bg-gradient-to-b from-[#bcdcf8] via-[#cfe5fb] to-[#b8d8f8] px-[6px] pb-[7px] font-['Liberation_Sans',Arial,sans-serif] text-[11px] tracking-[-0.04px] text-black shadow-[1px_3px_13px_4px_rgba(0,0,0,0.55),inset_0_0_0_1px_#eef7ff]">
    <div className="flex h-7 shrink-0 justify-between">
      <span className={`pl-px pt-[6px] text-[11.6px] leading-4 tracking-[-0.05px] ${segoe}`}>Curve Statistics</span>
      <div className="flex h-[19px] w-[47px] items-center justify-center rounded-b-[4px] border border-t-0 border-[#5c2420] bg-gradient-to-b from-[#e9a99c] via-[#c8402c] to-[#d8705c] shadow-[inset_0_0_0_1px_#eab4a8]">
        <svg viewBox="0 0 12 10" className="h-[10px] w-3"><path d="M2 1l8 8M10 1L2 9" stroke="#51505c" strokeWidth="3.800" /><path d="M2.500 1.500l7 7M9.500 1.500l-7 7" stroke="#fff" strokeWidth="2.200" /></svg>
      </div>
    </div>
    <div className="flex grow flex-col border border-[#5c6878] bg-[#f0f0f0] pl-4 pr-[11px] pt-[11px] shadow-[0_0_0_1px_#e4f2ff]">
      <div className="flex h-[80px] justify-between pr-px">
        <div className="w-[127px]"><Row label="Curves Processed:" value="2" w="w-0" /><Row label="Objects Skipped:" value="0" w="w-0" /></div>
        <div className="w-[111px]"><Row label="Nodes:" value="24" w="w-0" /><Row label="Segments:" value="24" w="w-0" /><Row label="Subpaths:" value="2" w="w-0" /></div>
      </div>
      <div className="flex h-[61px] justify-between pr-px">
        <div className="w-[228px]"><Row label="Total curve length:" value="470,94" unit="mm" w="ml-[9px] w-[36px]" /><Row label="Total curve area:" value="5930,105" unit="sq. mm" w="ml-[9px] w-[36px] whitespace-nowrap" /></div>
        <div className="flex h-6 items-center pt-[22px]">
          <span className="mr-[13px]">Units:</span>
          <div className="flex h-5 w-[55px] items-center border-2 border-b-white border-l-[#777] border-r-white border-t-[#777] bg-white pl-[2px]">
            <span className="grow">mm</span>
            <div className="flex h-4 w-4 items-center justify-center border border-b-[#666] border-l-white border-r-[#666] border-t-white bg-[#f0f0f0]"><Caret w="w-2" /></div>
          </div>
        </div>
      </div>
      <div className="flex justify-between">
        <div className="flex h-8 w-[120px] items-center justify-center border-b-2 border-l border-r-2 border-t border-b-[#777] border-l-white border-r-[#777] border-t-white">Copy to Clipboard</div>
        <div className="h-8 w-24 border border-black"><div className="flex h-full items-center justify-center border-b-2 border-l border-r-2 border-t border-b-[#888] border-l-white border-r-[#888] border-t-white">Close</div></div>
      </div>
    </div>
  </div>
);

export default function App() {
  return (
    <div className={`relative flex h-[767px] w-[773px] flex-col overflow-hidden bg-[#f0f0f0] text-black ${tahoma}`}>
      <div className={`flex h-[23px] shrink-0 items-center border-b-2 border-t border-b-[#111] border-t-[#222] bg-gradient-to-r from-[#a9b5b8] from-0% via-[#97a1a9] via-[26%] to-[#4c5764] to-[34%] text-[11.7px] tracking-[-0.02px] ${segoe}`}>
        <svg viewBox="1.5 1.5 15 15" className="mr-[5px] h-4 w-4">{icons.corel}</svg>
        <span className="whitespace-pre leading-4">Untitled-1 :: [Layer 1] ::  - [Untitled-1]</span>
      </div>
      <div className={`flex h-6 shrink-0 items-center bg-gradient-to-b from-[#8c8c8c] via-[#1c1c1c] via-50% to-[#1b1b1b] pl-[3px] text-[11.6px] tracking-[-0.05px] text-white ${segoe}`}>
        <svg viewBox="1.5 1.5 15 15" className="mr-[19px] h-[15px] w-3" preserveAspectRatio="none">{icons.corel}</svg>
        {menus.map(([a, u, b, w]) => <span key={a + u + b} className={`shrink-0 ${w}`}>{a}<u className="underline-offset-2">{u}</u>{b}</span>)}
      </div>

      <div className={`${bar} h-[30px] pl-[5px]`}>
        <Cells list="eyeArrow eyeNo" /><Sep w="w-[9px]" />
        <Cells list="newDoc open save saveNew saveCheck print" /><Sep w="w-[10px]" />
        <Cells list="cut copy paste find" /><Sep w="w-[9px]" />
        <Cell n="undo" /><Caret w="w-[15px]" /><Cell n="redo" /><Caret w="w-[15px]" c="border-t-[#999]" /><Sep w="w-[9px]" />
        <Cells list="imp exp pdf" /><Sep w="w-[8px]" />
        <Cell n="launch" /><Caret w="w-[15px]" /><Cell n="welcome" /><Sep w="w-[10px]" />
        <div className={`${field} ml-[4px] h-5 w-[86px] shrink-0 pl-1`}><span className="grow pt-px text-[11.5px]">86%</span><Caret w="w-4" /></div>
        <Sep w="w-[17px]" />
        <span className="w-[44px] shrink-0 pt-px text-[11px] tracking-[-0.2px]">Snap to</span><Caret w="w-[14px]" /><div className="ml-1"><Ic n="list" /></div>
      </div>

      <div className={`${bar} h-[39px]`}>
        <div className="flex h-full w-[101px] shrink-0 flex-col justify-between pt-1">
          <div className="ml-[6px] flex h-[22px] w-[90px] items-center rounded-[2px] border border-[#777] bg-gradient-to-b from-[#f4f4f4] to-[#dcdcdc] pl-1"><span className="grow pt-px">1:1</span><Caret w="w-4" /></div>
          <div className="h-[10px] bg-[#d4dcf0]" />
        </div>
        <div className="mx-[2px] h-[33px] w-px shrink-0 bg-[#c3c3c3]" />
        <div className="ml-1 w-[12px] shrink-0 pt-px leading-4"><div>x:</div><div>y:</div></div>
        <div className="w-[75px] shrink-0 pt-px"><div className={`${field} h-[17px] pl-[2px]`}>95,144 mm</div><div className={`${field} h-[16px] pl-[2px]`}>169,18 mm</div></div>
        <div className="ml-[6px] flex w-[15px] shrink-0 flex-col gap-[6px]">
          <svg viewBox="0 0 14 9" className="h-[9px] w-[14px]">{icons.sizeH}</svg>
          <svg viewBox="0 0 14 12" className="h-3 w-[14px]">{icons.sizeV}</svg>
        </div>
        <div className="w-[75px] shrink-0 pt-px"><div className={`${field} h-[17px] pl-[2px]`}>128,669 mm</div><div className={`${field} h-[16px] pl-[2px]`}>68,047 mm</div></div>
        <Sep w="w-[17px]" h="h-7" />
        <div className="w-[43px] shrink-0 pt-px"><div className={`${field} h-[17px] pl-[2px]`}>100,0</div><div className={`${field} h-[16px] pl-[2px]`}>100,0</div></div>
        <div className="ml-1 w-[18px] shrink-0 pb-px text-[11.5px] leading-4 text-[#444]"><div>%</div><div>%</div></div>
        <div className={`flex h-[15px] w-[15px] shrink-0 items-center justify-center ${pressedCls}`}>
          <svg viewBox="0 0 10 11" className="h-[11px] w-[10px]"><path d="M3 5V2.500q2-2.500 4 0V5" stroke={D} fill="none" strokeWidth="1.500" /><path d="M1 5h8v5H1z" fill="#33336c" /></svg>
        </div>
        <Sep w="w-[10px]" h="h-7" />
        <div className="w-[20px] shrink-0 pl-[1px]"><Ic n="rot" /></div>
        <div className={`${field} h-[22px] w-[46px] shrink-0 pl-[2px]`}>0,0</div>
        <span className="w-[20px] shrink-0 pl-1">°</span>
        <Sep w="w-[9px]" h="h-7" /><Cells list="mirH mirV" /><Sep w="w-[9px]" h="h-7" /><Cell n="order" /><Sep w="w-[8px]" h="h-7" />
        <Cells list="group ungroup ungroupAll" /><Sep w="w-[9px]" h="h-7" /><Cells list="weld trim inter simp" />
      </div>

      <div className={`${bar} h-[30px] pl-[6px]`}>
        <Cell n="pick" on /><Sep w="w-[9px]" /><Cell n="shape" /><Sep w="w-[9px]" />
        <Cells list="tri fill" /><Sep w="w-[9px]" /><Cells list="crop knife2 knife eraser smear rough" /><Sep w="w-[9px]" />
        <Cell n="free" /><Sep w="w-[8px]" /><Cells list="zoomI hand" /><Sep w="w-[9px]" />
        <Cells list="freehand twoPt line art pen bspline pyr arc3 dim conn" /><Sep w="w-[8px]" />
        <Cells list="rect rect3" /><Sep w="w-[9px]" /><Cells list="circ circ3" />
      </div>

      <div className={`${bar} h-[29px] pl-[6px] pt-[2px]`}>
        <Cell n="macro" on /><Sep w="w-[9px]" />
        <Cells list="waves waves2 smile bx hatchG hatchR sel el1 el2 el3 el4 rotA rotB plus arcY redCir redEl redX poly blob swap jpg ai1 ai2 ai3 corel ps1 ps2" />
      </div>

      <div className="flex grow">
        <div className="flex w-[30px] shrink-0 flex-col items-center border-r border-[#c3c3c3] bg-gradient-to-r from-[#fafafa] to-[#ececec] pt-[9px]">
          {leftTools.map((t) => {
            const on = t.endsWith("*");
            return (
              <div key={t} className="flex h-[26px] w-[26px] shrink-0 items-center justify-center">
                <div className={on ? `flex h-6 w-6 items-center justify-center ${pressedCls}` : "flex"}><Ic n={t.replace("*", "")} /></div>
              </div>
            );
          })}
          <div className="mt-[7px] h-px w-6 bg-[#bbb]" />
        </div>
        <div className="flex w-[30px] shrink-0 flex-col items-center border-r border-[#c3c3c3] bg-gradient-to-r from-[#fafafa] to-[#ececec] pt-[7px]">
          {macroTools.map(([n, h], i) => (
            <div key={i} className={`flex w-full shrink-0 items-center justify-center ${h}`}>
              {n === "-" ? <div className="h-px w-5 bg-[#c3c3c3]" /> : n === "stat" ? (
                <div className="flex h-[25px] w-[25px] items-center justify-center rounded-[2px] border border-[#b4cdea] bg-[#f6f9fd]"><Ic n={n} /></div>
              ) : <Ic n={n} />}
            </div>
          ))}
        </div>
        <div className="flex flex-col">
          <HRuler />
          <div className="flex"><VRuler /><Drawing /></div>
        </div>
      </div>

      <Dialog />
      <svg className="pointer-events-none absolute left-0 top-0 h-[767px] w-[773px]" viewBox="0 0 773 767">
        <rect x="29.500" y="176.500" width="37" height="344" fill="none" stroke="#ff0000" strokeWidth="3" />
        <ellipse cx="47.500" cy="493.500" rx="25.500" ry="16" fill="none" stroke="#ff0000" strokeWidth="2" />
        <path d="M61 494.500L190 518.500" stroke="#ff0000" strokeWidth="2" />
        <path d="M201.500 521L185.500 513L183 523.500z" fill="#ff0000" />
        <path d="M53 500v15l3.500-3 3 6 2.500-1.500-3-5.500h5z" fill="#fff" stroke="#222" strokeWidth="1.200" />
      </svg>
    </div>
  );
}
